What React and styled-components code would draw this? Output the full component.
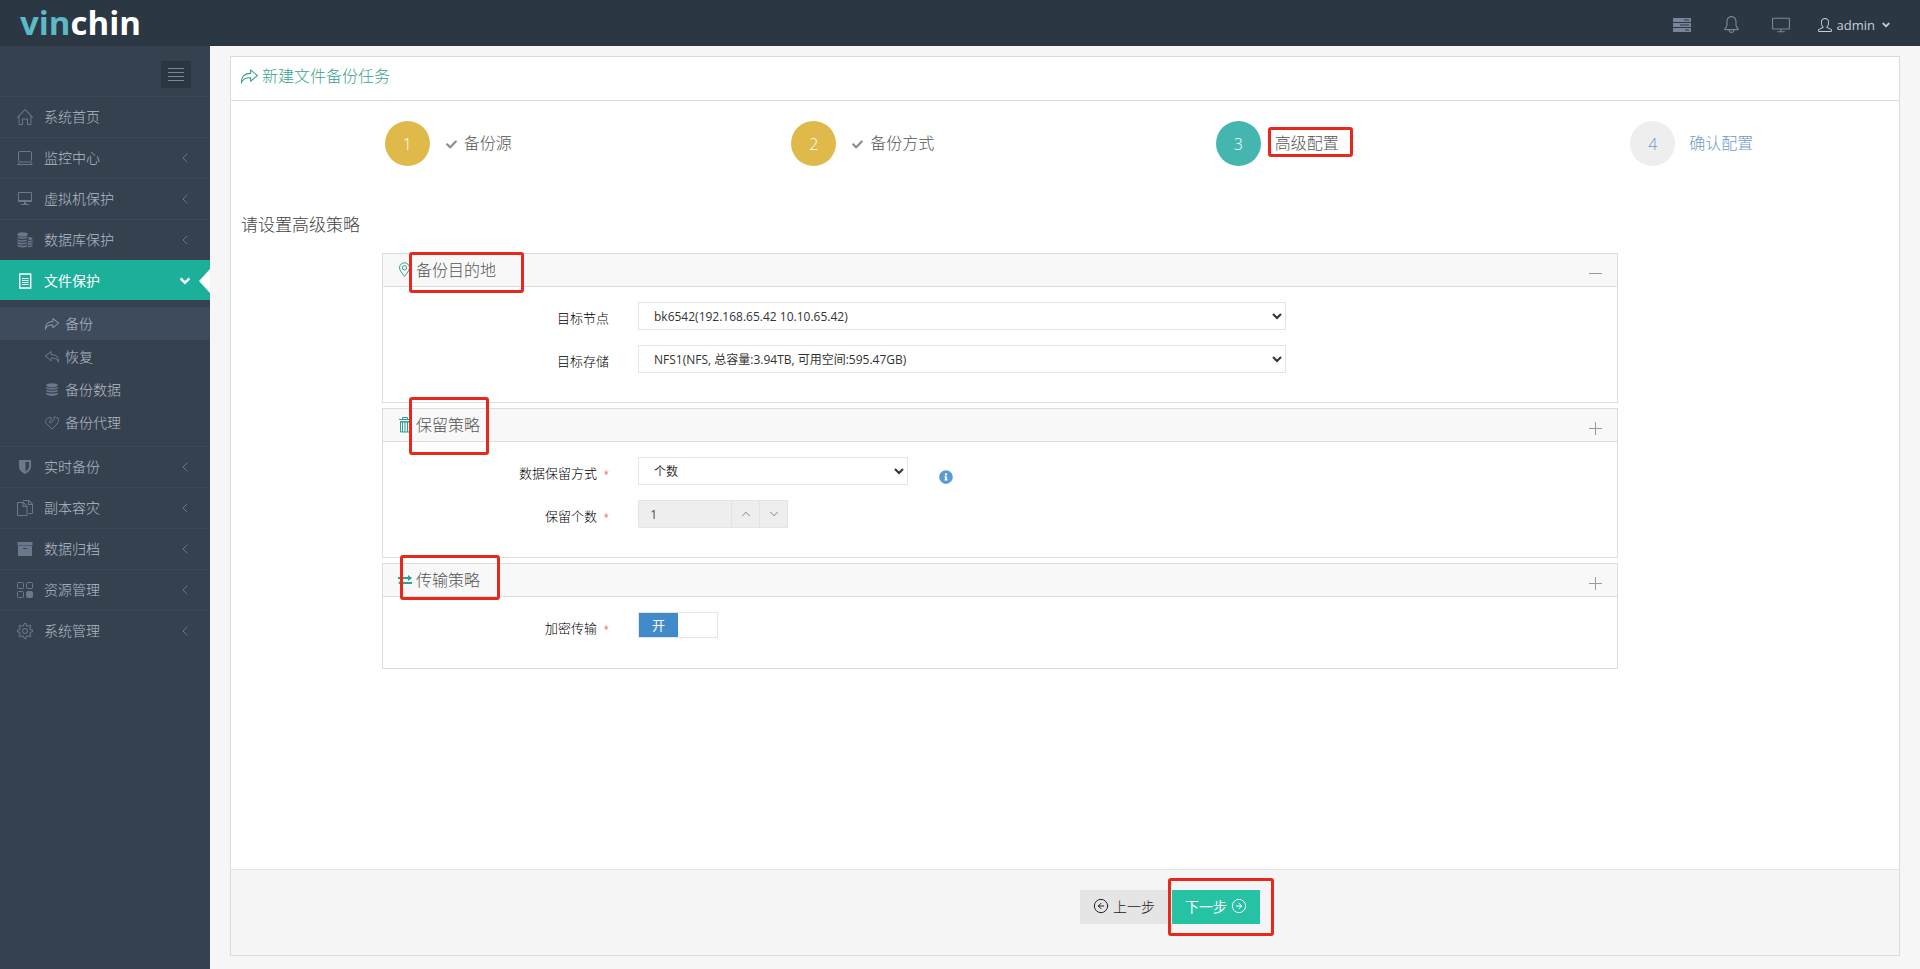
import React, { useState } from 'react';
import styled, { createGlobalStyle, css } from 'styled-components';
import {
  SlHome, SlScreenDesktop, SlBell, SlUser, SlSettings, SlActionRedo,
  SlActionUndo, SlDocs,
} from 'react-icons/sl';
import { FaAngleDown, FaCheck, FaInfoCircle } from 'react-icons/fa';
import { CircleArrowLeft, CircleArrowRight, ChevronUp, ChevronDown, ChevronLeft } from 'lucide-react';

const GlobalStyle = createGlobalStyle`
  * {
    box-sizing: border-box;
  }
  body {
    margin: 0;
    background: #f6f6f6;
    color: #333;
    font-family: "Open Sans", "Noto Sans CJK SC", sans-serif;
    font-size: 13px;
    line-height: 20px;
  }
  button, input, select {
    font-family: inherit;
  }
  a {
    text-decoration: none;
  }
  ul, ol {
    list-style: none;
    margin: 0;
    padding: 0;
  }
`;

const Page = styled.div`
  display: flex;
  flex-direction: column;
  min-height: 100vh;
`;
const Header = styled.header`
  display: flex;
  justify-content: space-between;
  align-items: center;
  height: 46px;
  padding: 0 28px 0 20px;
  background: #2b3743;
`;
const Logo = styled.a`
  color: #fff;
  font-size: 33px;
  font-weight: 700;
  line-height: 44px;

  span {
    color: #5cbac8;
  }
`;
const TopNav = styled.nav`
  display: flex;
  align-items: center;
  gap: 32px;
  padding-top: 3px;
`;
const IconButton = styled.button`
  display: flex;
  padding: 0;
  border: 0;
  background: none;
  color: #79869a;
  cursor: pointer;
`;
const UserButton = styled(IconButton)`
  align-items: center;
  gap: 5px;
  margin-left: -4px;
  color: #c6cfda;
  font-size: 13px;
`;

const Body = styled.div`
  display: flex;
  flex: 1;
`;
const Sidebar = styled.aside`
  flex: none;
  width: 210px;
  background: #364150;
`;
const ToggleRow = styled.div`
  display: flex;
  justify-content: flex-end;
  height: 50px;
  padding: 15px 19px 0 0;
`;
const Toggle = styled.button`
  display: flex;
  align-items: center;
  justify-content: center;
  width: 30px;
  height: 27px;
  padding: 0;
  border: 0;
  background: #2b3643;
  color: #7b8797;
`;
const MenuLink = styled.a`
  position: relative;
  display: flex;
  align-items: center;
  height: 41px;
  padding: 0 17px;
  border-top: 1px solid #3e4958;
  color: #b4bcc8;
  font-size: 14px;
  font-weight: 300;

  svg {
    color: #6b788c;
  }
  span {
    flex: 1;
    margin-left: 11px;
  }

  ${props => props.$active && css`
    height: 40px;
    border-color: #1caf9a;
    background: #1caf9a;
    color: #fff;
    font-weight: 400;

    svg {
      color: #fff;
    }
    &::after {
      content: "";
      position: absolute;
      right: 0;
      top: 8px;
      border: 12px solid transparent;
      border-left-width: 0;
      border-right: 11px solid #fff;
    }
  `}
`;
const SubMenu = styled.ul`
  padding: 7px 0;
`;
const SubLink = styled.a`
  display: flex;
  align-items: center;
  gap: 6px;
  height: 33px;
  padding-left: 45px;
  background: ${props => props.$active ? '#3e4b5c' : 'transparent'};
  color: #b4bcc8;
  font-size: 14px;
  font-weight: 300;

  svg {
    color: ${props => props.$active ? '#8f9cae' : '#6b788c'};
  }
`;

const Main = styled.main`
  display: flex;
  flex: 1;
  flex-direction: column;
  padding: 10px 20px 13px;
`;
const Card = styled.section`
  display: flex;
  flex: 1;
  flex-direction: column;
  border: 1px solid #dcdcdc;
  background: #fff;
`;
const CardTitle = styled.h1`
  display: flex;
  align-items: center;
  gap: 4px;
  height: 44px;
  margin: 0;
  padding: 0 10px 5px;
  border-bottom: 1px solid #dcdcdc;
  color: #3aa18f;
  font-size: 16px;
  font-weight: 300;
`;
const Steps = styled.ol`
  display: flex;
  padding: 20px 0 0 10px;
`;
const Step = styled.li`
  display: flex;
  flex: 1;
  align-items: center;
  justify-content: center;
  gap: 14px;
  color: ${props => props.$color};
  font-size: 16px;
  font-weight: 300;
`;
const StepNumber = styled.span`
  display: flex;
  align-items: center;
  justify-content: center;
  width: 45px;
  height: 45px;
  border-radius: 50%;
  background: ${props => props.$bg};
  color: ${props => props.$color};
`;
const StepLabel = styled.span`
  position: relative;
  display: flex;
  align-items: center;
  gap: 7px;
  padding-bottom: 2px;

  svg {
    margin: 3px 0 0 2px;
    color: #8c8c8c;
  }
`;
/* red frame drawn over the part it points out */
const Mark = styled.i`
  position: absolute;
  left: ${props => props.$left}px;
  top: ${props => props.$top}px;
  width: ${props => props.$width}px;
  height: ${props => props.$height}px;
  border: 3px solid #e8281c;
  border-radius: 3px;
  pointer-events: none;
`;

const Form = styled.form`
  display: flex;
  flex: 1;
  flex-direction: column;
`;
const Content = styled.div`
  flex: 1;
  padding: 48px 10px 30px;
`;
const Lead = styled.h2`
  margin: 0 0 17px;
  color: #444;
  font-size: 17px;
  font-weight: 300;
  line-height: 22px;
`;
const Panel = styled.section`
  width: 75%;
  margin: 0 0 5px 141px;
  border: 1px solid #ddd;
`;
const PanelHead = styled.div`
  position: relative;
  display: flex;
  align-items: center;
  justify-content: space-between;
  height: 33px;
  padding: 0 15px;
  border-bottom: 1px solid #ddd;
  background: #f8f8f8;
`;
const PanelTitle = styled.h3`
  display: flex;
  align-items: center;
  gap: 4px;
  margin: 0;
  padding-bottom: 1px;
  color: #555;
  font-size: 16px;
  font-weight: 300;

  svg {
    color: #2f9e97;
  }
`;
const Collapse = styled.button`
  display: flex;
  padding: 6px 0 0;
  border: 0;
  background: none;
  color: #999;
`;
const PanelBody = styled.div`
  padding: 15px 19px 29px 15px;
`;
const Row = styled.div`
  display: flex;
  align-items: flex-start;

  & + & {
    margin-top: 15px;
  }
`;
const Label = styled.label`
  flex: none;
  width: 211px;
  margin-right: 29px;
  padding-top: 6px;
  color: #000;
  font-weight: 300;
  text-align: right;

  em {
    margin-left: 3px;
    color: #e02222;
    font-style: normal;
    font-size: 10px;
  }
`;
const Select = styled.select`
  width: ${props => props.$narrow ? '22.5%' : '54%'};
  height: 28px;
  padding: 0 11px;
  border: 1px solid #e5e5e5;
  border-radius: 0;
  background: #fff;
  color: #333;
  font-size: 12px;
`;
const Info = styled.span`
  display: flex;
  padding: 13px 0 0 31px;
  color: #5b9bd1;
`;
const Spinner = styled.div`
  display: flex;
  width: 150px;
  height: 28px;
  border: 1px solid #e5e5e5;
  background: #eee;

  input {
    flex: 1;
    min-width: 0;
    padding: 0 11px;
    border: 0;
    background: none;
    color: #555;
    font-size: 13px;
  }
  button {
    display: flex;
    align-items: center;
    justify-content: center;
    width: 28px;
    padding: 0;
    border: 0;
    border-left: 1px solid #e3e3e3;
    background: none;
    color: #777;
  }
`;
const Switch = styled.span`
  position: relative;
  display: flex;
  width: 80px;
  height: 26px;
  border: 1px solid #e5e5e5;
  background: #fff;
  color: #fff;

  input {
    position: absolute;
    inset: 0;
    margin: 0;
    opacity: 0;
    cursor: pointer;
  }
  span {
    width: 50%;
    margin-left: ${props => props.$on ? 0 : '50%'};
    background: ${props => props.$on ? '#428bca' : '#ccc'};
    line-height: 24px;
    text-align: center;
  }
`;

const Footer = styled.footer`
  display: flex;
  gap: 4px;
  padding: 20px 0 31px calc(50% + 15px);
  border-top: 1px solid #e5e5e5;
  background: #f5f5f5;
`;
const ButtonSlot = styled.div`
  position: relative;
`;
const Button = styled.button`
  display: flex;
  align-items: center;
  justify-content: center;
  gap: 4px;
  width: 88px;
  height: 34px;
  padding: 0 0 2px;
  border: 0;
  background: ${props => props.$primary ? '#26c2a4' : '#e5e5e5'};
  color: ${props => props.$primary ? '#fff' : '#222'};
  font-size: 14px;
  font-weight: ${props => props.$primary ? 400 : 300};
`;

const DatabaseIcon = ({ size = 16 }) => (
  <svg width={size} height={size} viewBox="0 0 16 16" fill="currentColor" aria-hidden="true">
    <ellipse cx="8" cy="2.6" rx="6.6" ry="2.4" />
    <path d="M1.4 4.6c1 1.7 12.2 1.7 13.2 0v1.5c-1 2.2-12.2 2.2-13.2 0zM1.4 7.7c1 1.7 12.2 1.7 13.2 0v1.5c-1 2.2-12.2 2.2-13.2 0zM1.4 10.8c1 1.7 12.2 1.7 13.2 0v1.6c-1 3.2-12.2 3.2-13.2 0z" />
  </svg>
);
const CoinsIcon = () => (
  <svg width="16" height="16" viewBox="0 0 17 17" fill="currentColor" aria-hidden="true">
    <ellipse cx="6" cy="2.6" rx="5.4" ry="2.4" />
    <path d="M.4 4.6c1 1.6 9.6 1.7 11 0v1.3c-2 2-10 2-11 0zM.4 7.4c1 1.6 7.6 2 10 .4v1.6c-2 1.4-9 1.3-10-.4zM.4 10.2c1 1.6 7.6 2 10 .5v1.6c-2 1.4-9 1.3-10-.4zM.4 13.1c1 1.6 7.6 2 10 .4v2.1c-3 1.3-9 1-10-1z" />
    <path d="M12.4 5.2c2 0 4.2.6 4.2 1.6s-2 1.6-4.2 1.6zM11.4 9.4c2 .2 4.4-.2 5.2-1v1.5c-.9 1-3.2 1.3-5.2 1.2zM11.4 12c2 .2 4.4-.2 5.2-1v1.5c-.9 1-3.2 1.3-5.2 1.2zM11.4 14.5c2 .2 4.4-.2 5.2-1v1.5c-.9 1-3.2 1.3-5.2 1.2z" />
  </svg>
);
const LaptopIcon = () => (
  <svg width="16" height="16" viewBox="0 0 16 16" fill="none" stroke="currentColor" aria-hidden="true">
    <rect x="1.5" y="1.5" width="13" height="10.5" rx="1.5" />
    <path d="M2.5 12.5L.7 14.5h14.6L13.5 12.5" />
  </svg>
);
const MonitorIcon = () => (
  <svg width="16" height="16" viewBox="0 0 16 16" aria-hidden="true">
    <path d="M1.5 1.5h13v9h-13z" fill="none" stroke="currentColor" />
    <path d="M1 9h14v2H1zM7 11h2v2H7zM4 13h8v1H4z" fill="currentColor" />
  </svg>
);
const FileIcon = () => (
  <svg width="16" height="16" viewBox="0 0 16 16" aria-hidden="true">
    <path d="M2.7 1h11v14h-11z" fill="none" stroke="currentColor" strokeWidth="1.4" />
    <path d="M5 5.5h6.5M5 7.5h6.5M5 9.5h6.5M5 11.5h6.5" stroke="currentColor" />
  </svg>
);
const ShieldIcon = () => (
  <svg width="16" height="16" viewBox="0 0 16 16" aria-hidden="true">
    <path d="M2 1h12v6.5c0 3.5-2.5 5.5-6 7.5-3.5-2-6-4-6-7.5z" fill="currentColor" />
    <path d="M8.5 3H12v4.5c0 2-1.5 3.5-3.5 5z" fill="#364150" />
  </svg>
);
const ArchiveIcon = () => (
  <svg width="16" height="16" viewBox="0 0 16 16" fill="currentColor" aria-hidden="true">
    <path d="M.5 1h15v3.5H.5zM1 5h14v10H1zM6 7v1h4V7z" fillRule="evenodd" />
  </svg>
);
const BlocksIcon = () => (
  <svg width="16" height="16" viewBox="0 0 16 16" fill="none" stroke="currentColor" aria-hidden="true">
    <rect x=".5" y=".5" width="6" height="6" rx="1" />
    <rect x="9.5" y=".5" width="6" height="6" rx="1" />
    <rect x=".5" y="9.5" width="6" height="6" rx="1" />
    <rect x="9.5" y="9.5" width="6" height="6" rx="1" fill="currentColor" />
  </svg>
);
const AgentIcon = () => (
  <svg width="14" height="14" viewBox="0 0 14 14" fill="none" stroke="currentColor" aria-hidden="true">
    <path d="M7 13.2L1.2 7.5C-.2 5.5.8 2.7 3.3 2.2L5.8 1.2 6.3 4.2 4 5.8 5.5 7 9.3 3.5 8.5 1.2C10 .6 10.8.8 11.5 2L13.2 1.8C13.8 4.5 13.2 6.6 12 8z" />
  </svg>
);
const ServerIcon = () => (
  <svg width="18" height="14" viewBox="0 0 18 14" fill="currentColor" aria-hidden="true">
    <path d="M0 0h18v4H0zM11 1.5v1h5v-1zM0 5h18v4H0zM7 6.5v1h9v-1zM0 10h18v4H0zM12 11.5v1h4v-1z" fillRule="evenodd" />
  </svg>
);
const PinIcon = () => (
  <svg width="14" height="16" viewBox="0 0 14 16" fill="none" stroke="currentColor" aria-hidden="true">
    <path d="M6.5 14.5C4.5 11.5 1.5 8.5 1.5 5.8a5 5 0 0 1 10 0c0 2.7-3 5.7-5 8.7z" />
    <circle cx="6.5" cy="5.8" r="2.2" />
  </svg>
);
const TrashIcon = () => (
  <svg width="14" height="16" viewBox="0 0 14 16" fill="none" stroke="currentColor" aria-hidden="true">
    <path d="M1 2.5h12M4.500 2.500V.5h5v2M2.500 5v10h9V5z" />
    <path d="M2 4.700h10M4.500 5v10M7 5v10M9.500 5v10" />
  </svg>
);
const ExchangeIcon = () => (
  <svg width="14" height="14" viewBox="0 0 14 14" fill="currentColor" aria-hidden="true">
    <path d="M0 4h10V2l4 3-4 3V6H0zM14 11H4v1.5L0 10l4-3v2h10z" />
  </svg>
);
const BarsIcon = () => (
  <svg width="16" height="13" viewBox="0 0 16 13" stroke="currentColor" aria-hidden="true">
    <path d="M0 .5h16M0 4.5h16M0 8.5h16M0 12.5h16" />
  </svg>
);

const menuTop = [
  { label: '系统首页', icon: <SlHome size={16} />, leaf: true },
  { label: '监控中心', icon: <LaptopIcon /> },
  { label: '虚拟机保护', icon: <MonitorIcon /> },
  { label: '数据库保护', icon: <CoinsIcon /> },
  { label: '文件保护', icon: <FileIcon />, active: true },
];
const subMenu = [
  { label: '备份', icon: <SlActionRedo size={14} />, active: true },
  { label: '恢复', icon: <SlActionUndo size={14} /> },
  { label: '备份数据', icon: <DatabaseIcon size={14} /> },
  { label: '备份代理', icon: <AgentIcon /> },
];
const menuBottom = [
  { label: '实时备份', icon: <ShieldIcon /> },
  { label: '副本容灾', icon: <SlDocs size={16} /> },
  { label: '数据归档', icon: <ArchiveIcon /> },
  { label: '资源管理', icon: <BlocksIcon /> },
  { label: '系统管理', icon: <SlSettings size={16} /> },
];

function MenuItem({ item }) {
  return (
    <li>
      <MenuLink href="#" $active={item.active}>
        {item.icon}
        <span>{item.label}</span>
        {item.active && <FaAngleDown size={16} />}
        {!item.active && !item.leaf && <ChevronLeft size={16} strokeWidth={1.5} />}
      </MenuLink>
    </li>
  );
}

function PanelBox({ title, icon, open, mark, children }) {
  return (
    <Panel>
      <PanelHead>
        <PanelTitle>{icon}{title}</PanelTitle>
        <Collapse type="button" aria-label={title}>
          <svg width="13" height="13" viewBox="0 0 13 13" stroke="currentColor">
            <path d={open ? 'M0 6.5h13' : 'M0 6.5h13M6.5 0v13'} />
          </svg>
        </Collapse>
        <Mark $left={mark[0]} $top={mark[1]} $width={mark[2]} $height={mark[3]} />
      </PanelHead>
      <PanelBody>{children}</PanelBody>
    </Panel>
  );
}

function App() {
  const [count, setCount] = useState(1);
  const [encrypted, setEncrypted] = useState(true);

  return (
    <Page>
      <GlobalStyle />
      <Header>
        <Logo href="#"><span>vin</span>chin</Logo>
        <TopNav>
          <IconButton aria-label="任务"><ServerIcon /></IconButton>
          <IconButton aria-label="通知"><SlBell size={17} /></IconButton>
          <IconButton aria-label="监控"><SlScreenDesktop size={18} /></IconButton>
          <UserButton>
            <SlUser size={14} />
            <span>admin</span>
            <FaAngleDown size={12} />
          </UserButton>
        </TopNav>
      </Header>
      <Body>
        <Sidebar>
          <ToggleRow>
            <Toggle aria-label="菜单"><BarsIcon /></Toggle>
          </ToggleRow>
          <ul>
            {menuTop.map(item => <MenuItem key={item.label} item={item} />)}
            <li>
              <SubMenu>
                {subMenu.map(item => (
                  <li key={item.label}>
                    <SubLink href="#" $active={item.active}>{item.icon}{item.label}</SubLink>
                  </li>
                ))}
              </SubMenu>
            </li>
            {menuBottom.map(item => <MenuItem key={item.label} item={item} />)}
          </ul>
        </Sidebar>
        <Main>
          <Card>
            <CardTitle><SlActionRedo size={17} />新建文件备份任务</CardTitle>
            <Steps>
              <Step $color="#555">
                <StepNumber $bg="#dfb94a" $color="#fff">1</StepNumber>
                <StepLabel><FaCheck size={11} />备份源</StepLabel>
              </Step>
              <Step $color="#555">
                <StepNumber $bg="#dfb94a" $color="#fff">2</StepNumber>
                <StepLabel><FaCheck size={11} />备份方式</StepLabel>
              </Step>
              <Step $color="#555">
                <StepNumber $bg="#45b6af" $color="#fff">3</StepNumber>
                <StepLabel>
                  高级配置
                  <Mark $left={-7} $top={-6} $width={85} $height={30} />
                </StepLabel>
              </Step>
              <Step $color="#6f9bcb">
                <StepNumber $bg="#eee" $color="#6f9bcb">4</StepNumber>
                <StepLabel>确认配置</StepLabel>
              </Step>
            </Steps>
            <Form onSubmit={e => e.preventDefault()}>
              <Content>
                <Lead>请设置高级策略</Lead>
                <PanelBox title="备份目的地" icon={<PinIcon />} open mark={[26, -2, 115, 41]}>
                  <Row>
                    <Label htmlFor="node">目标节点</Label>
                    <Select id="node">
                      <option>bk6542(192.168.65.42 10.10.65.42)</option>
                    </Select>
                  </Row>
                  <Row>
                    <Label htmlFor="storage">目标存储</Label>
                    <Select id="storage">
                      <option>NFS1(NFS, 总容量:3.94TB, 可用空间:595.47GB)</option>
                    </Select>
                  </Row>
                </PanelBox>
                <PanelBox title="保留策略" icon={<TrashIcon />} mark={[26, -12, 80, 58]}>
                  <Row>
                    <Label htmlFor="mode">数据保留方式 <em>*</em></Label>
                    <Select id="mode" $narrow>
                      <option>个数</option>
                    </Select>
                    <Info><FaInfoCircle size={14} /></Info>
                  </Row>
                  <Row>
                    <Label htmlFor="count">保留个数 <em>*</em></Label>
                    <Spinner>
                      <input id="count" value={count} readOnly />
                      <button type="button" aria-label="增加" onClick={() => setCount(count + 1)}>
                        <ChevronUp size={14} strokeWidth={1.5} />
                      </button>
                      <button type="button" aria-label="减少" onClick={() => setCount(Math.max(1, count - 1))}>
                        <ChevronDown size={14} strokeWidth={1.5} />
                      </button>
                    </Spinner>
                  </Row>
                </PanelBox>
                <PanelBox title="传输策略" icon={<ExchangeIcon />} mark={[17, -9, 100, 45]}>
                  <Row>
                    <Label htmlFor="encrypt">加密传输 <em>*</em></Label>
                    <Switch $on={encrypted}>
                      <span>{encrypted ? '开' : '关'}</span>
                      <input
                        id="encrypt"
                        type="checkbox"
                        checked={encrypted}
                        onChange={e => setEncrypted(e.target.checked)}
                      />
                    </Switch>
                  </Row>
                </PanelBox>
              </Content>
              <Footer>
                <Button type="button"><CircleArrowLeft size={16} strokeWidth={1.5} />上一步</Button>
                <ButtonSlot>
                  <Button type="submit" $primary>下一步<CircleArrowRight size={16} strokeWidth={1.5} /></Button>
                  <Mark $left={-4} $top={-12} $width={106} $height={58} />
                </ButtonSlot>
              </Footer>
            </Form>
          </Card>
        </Main>
      </Body>
    </Page>
  );
}

export default App;
